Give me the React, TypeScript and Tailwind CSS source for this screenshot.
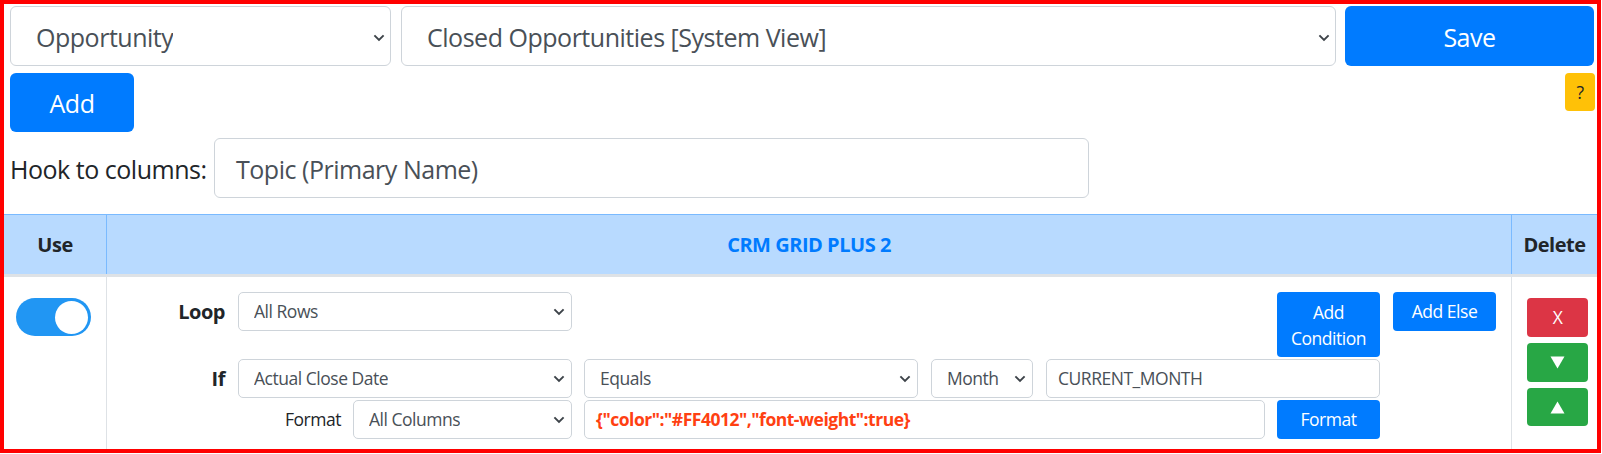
import React from 'react';

const Chevron = () => (
  <svg width="12" height="8" viewBox="0 0 12 8" className="shrink-0">
    <path d="M1.4 1.4 6 6l4.6-4.6" fill="none" stroke="#3d4349" strokeWidth="1.9" />
  </svg>
);

type SelectProps = { value: string; big?: boolean; className?: string };

const FakeSelect: React.FC<SelectProps> = ({ value, big, className = '' }) => (
  <div
    className={`flex items-center justify-between border border-[#ced4da] bg-white text-[#495057] ${
      big
        ? 'h-[60px] rounded-[6px] pl-[25px] pr-[5px] pt-[3px] text-[25px]'
        : 'h-[39px] rounded-[5px] pl-[15px] pr-[6px] text-[17.5px]'
    } ${className}`}
  >
    <span className="truncate">{value}</span>
    <Chevron />
  </div>
);

const Triangle = ({ up }: { up?: boolean }) => (
  <svg width="15" height="13" viewBox="0 0 15 13">
    <polygon points={up ? '7.5,0.5 14.5,12.5 0.5,12.5' : '0.5,0.5 14.5,0.5 7.5,12.5'} fill="#fff" />
  </svg>
);

export default function App() {
  return (
    <div className="font-['Open_Sans','Noto_Sans',sans-serif] tracking-[-0.03em] leading-[1.5] bg-white">
      <div className="flex h-[453px] w-[1601px] flex-col overflow-hidden border-4 border-[#ff0000]">
        {/* top controls */}
        <div className="pl-[6px] pr-[3px] pt-[2px]">
          <div className="flex h-[60px]">
            <FakeSelect big value="Opportunity" className="w-[381px]" />
            <FakeSelect big value="Closed Opportunities [System View]" className="ml-[10px] flex-1" />
            <button className="ml-[9px] w-[249px] rounded-[6px] bg-[#007bff] pt-[3px] text-[25px] text-white">Save</button>
          </div>
          <div className="mt-[7px] flex items-start justify-between">
            <button className="h-[59px] w-[124px] rounded-[6px] bg-[#007bff] pt-[3px] text-[25px] text-white">Add</button>
            <button className="mr-[-1px] h-[38px] w-[30px] rounded-[4px] bg-[#ffc107] text-[17.5px] text-[#212529]">?</button>
          </div>
          <div className="mt-[6px] flex items-center">
            <span className="w-[204px] pt-[3px] text-[25px] text-[#212529]">Hook to columns:</span>
            <div className="flex h-[60px] w-[875px] items-center rounded-[6px] border border-[#ced4da] pl-[21px] pt-[3px] text-[25px] text-[#495057]">
              Topic (Primary Name)
            </div>
          </div>
        </div>

        {/* rules table */}
        <div className="mt-[16px] flex flex-1 flex-col">
          <div className="grid h-[63px] grid-cols-[102px_1fr_86px] border-t border-b-[3px] border-t-[#7abaff] border-b-[#dee2e6] bg-[#b8daff] text-[20px] font-bold">
            <div className="flex items-center justify-center text-[#212529]">Use</div>
            <div className="flex items-center justify-center border-l border-[#7abaff] text-[#007bff]">CRM GRID PLUS 2</div>
            <div className="flex items-center justify-center border-l border-[#7abaff] text-[#212529]">Delete</div>
          </div>

          <div className="grid flex-1 grid-cols-[102px_1fr_86px]">
            <div className="pl-[12px] pt-[21px]">
              <div className="flex h-[38px] w-[75px] items-center justify-end rounded-full bg-[#2196f3] pr-[3px]">
                <div className="h-[33px] w-[33px] rounded-full bg-white" />
              </div>
            </div>

            <div className="border-l border-[#dee2e6] pl-[14px] pr-[15px] pt-[15px] text-[#212529]">
              <div className="flex h-[65px] items-start">
                <div className="flex h-[39px] w-[104px] items-center justify-end text-[20px] font-bold">Loop</div>
                <FakeSelect value="All Rows" className="ml-[13px] w-[334px]" />
                <div className="flex-1" />
                <button className="h-[65px] w-[103px] rounded-[4px] bg-[#007bff] text-[17.5px] leading-[26px] text-white">
                  Add
                  <br />
                  Condition
                </button>
                <button className="ml-[13px] h-[39px] w-[103px] rounded-[4px] bg-[#007bff] text-[17.5px] text-white">Add Else</button>
              </div>

              <div className="mt-[2px] flex items-center">
                <div className="flex h-[39px] w-[104px] items-center justify-end text-[20px] font-bold">If</div>
                <FakeSelect value="Actual Close Date" className="ml-[13px] w-[334px]" />
                <FakeSelect value="Equals" className="ml-[12px] w-[334px]" />
                <FakeSelect value="Month" className="ml-[13px] w-[102px]" />
                <div className="ml-[13px] flex h-[39px] w-[334px] items-center rounded-[5px] border border-[#ced4da] pl-[11px] text-[17.5px] text-[#495057]">
                  CURRENT_MONTH
                </div>
              </div>

              <div className="mt-[2px] flex items-center">
                <div className="w-[220px] text-right text-[17.5px]">Format</div>
                <FakeSelect value="All Columns" className="ml-[12px] w-[219px]" />
                <div className="ml-[12px] flex h-[39px] w-[681px] items-center rounded-[5px] border border-[#ced4da] pl-[11px] text-[17.5px] font-bold text-[#ff4012]">
                  {'{"color":"#FF4012","font-weight":true}'}
                </div>
                <button className="ml-[12px] h-[39px] w-[103px] rounded-[4px] bg-[#007bff] text-[17.5px] text-white">Format</button>
              </div>
            </div>

            <div className="flex flex-col gap-[6px] border-l border-[#dee2e6] pl-[15px] pt-[21px]">
              <button className="h-[39px] w-[61px] rounded-[4px] bg-[#dc3545] text-[17.5px] text-white">X</button>
              <button className="flex h-[39px] w-[61px] items-center justify-center rounded-[4px] bg-[#28a745]">
                <Triangle />
              </button>
              <button className="flex h-[38px] w-[61px] items-center justify-center rounded-[4px] bg-[#28a745]">
                <Triangle up />
              </button>
            </div>
          </div>
        </div>
      </div>
    </div>
  );
}
